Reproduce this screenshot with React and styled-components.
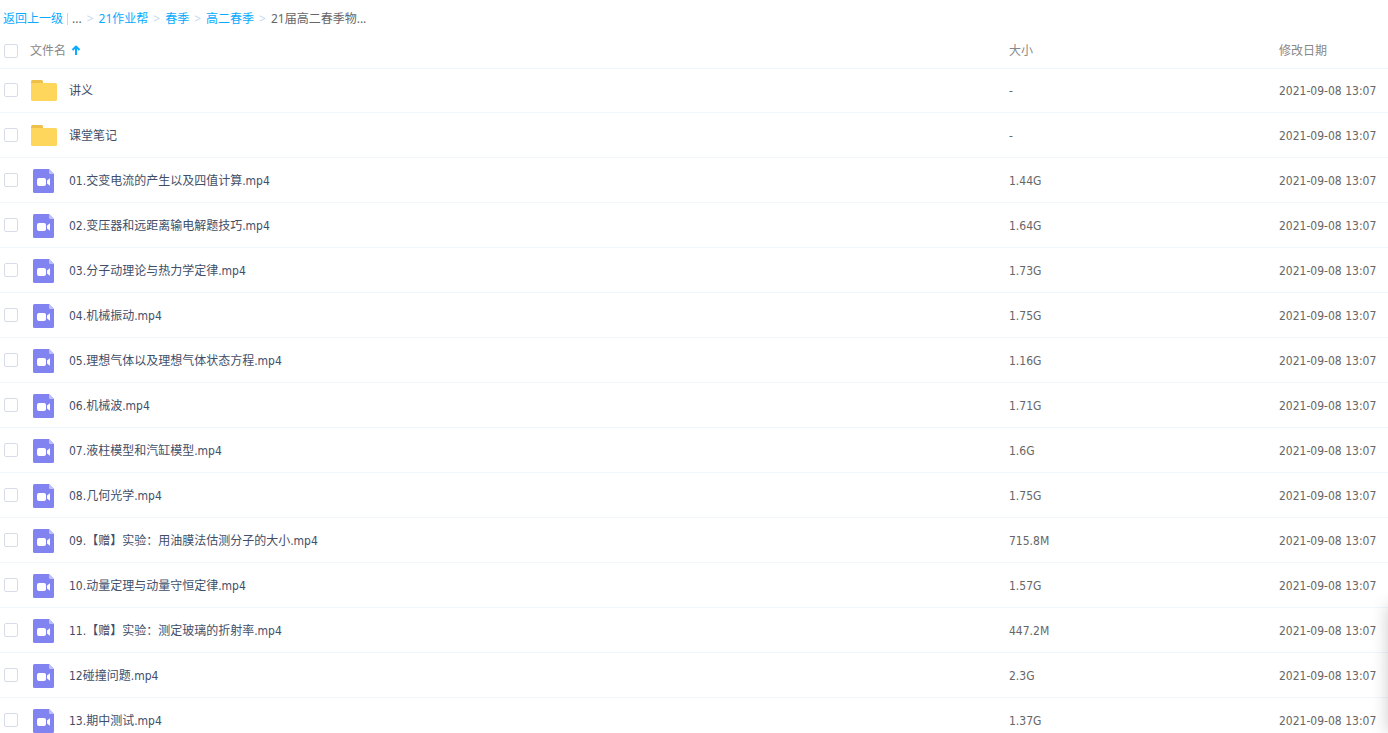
import React from 'react'
import styled, { createGlobalStyle } from 'styled-components'

const colors = {
  link: '#09aaff',
  divider: '#c4d8f0',
  line: '#f2f6fd',
  header: '#888888',
  name: '#424e67',
  meta: '#666666',
  box: '#d6dce8',
}

const GlobalStyle = createGlobalStyle`
  html {
    scrollbar-width: none;
  }

  body {
    margin: 0;
    background: #fff;
    font: 12px/18px "Noto Sans", "Noto Sans CJK SC", sans-serif;
  }
`;

const Page = styled.main`
  overflow: hidden;
`;

const Breadcrumb = styled.nav`
  display: flex;
  align-items: center;
  height: 30px;
  padding: 8px 3px 0;
  box-sizing: border-box;
  color: ${colors.meta};
  white-space: nowrap;
`;

const CrumbLink = styled.a`
  color: ${colors.link};
  text-decoration: none;
`;

const Bar = styled.span`
  width: 1px;
  height: 12px;
  margin: 0 4px;
  background: ${colors.divider};
`;

const Separator = styled.span`
  margin: 0 5px;
  color: ${colors.divider};
`;

const FileTable = styled.table`
  width: 100%;
  table-layout: fixed;
  border-collapse: separate;
  border-spacing: 0;
`;

const HeadCell = styled.th`
  width: ${({ $width }) => $width};
  height: 35px;
  padding: 3px 0 0;
  color: ${colors.header};
  font-weight: normal;
  text-align: left;
  box-shadow: 0 1px 0 ${colors.line};
`;

const Cell = styled.td`
  height: 42px;
  padding: 2px 0 0;
  border-bottom: 1px solid ${colors.line};
  color: ${colors.meta};
  font-family: "DejaVu Sans Condensed", "Noto Sans", "Noto Sans CJK SC", sans-serif;
  white-space: nowrap;
`;

const NameGroup = styled.div`
  display: flex;
  align-items: center;
  padding-left: 4px;
`;

const Checkbox = styled.input`
  appearance: none;
  flex: none;
  width: 14px;
  height: 14px;
  margin: 0 12px 0 0;
  border: 1px solid ${colors.box};
  border-radius: 2px;
  background: #fff;

  &:checked {
    background: ${colors.link};
  }

  td & {
    margin-bottom: 2px;
  }
`;

const IconSlot = styled.span`
  display: flex;
  justify-content: center;
  width: 28px;
  margin-right: 11px;
`;

const FileName = styled.label`
  color: ${colors.name};
`;

const SortButton = styled.button`
  display: flex;
  align-items: center;
  gap: 5px;
  padding: 0;
  border: 0;
  background: none;
  color: inherit;
  font: inherit;
`;

// panel docked just past the right edge, only its shadow shows
const DockedPanel = styled.aside`
  position: fixed;
  left: 100%;
  bottom: 0;
  width: 200px;
  height: 128px;
  box-shadow: 0 0 16px rgba(0, 0, 0, 0.2);
`;

const FolderIcon = () => (
  <svg width="26" height="22" viewBox="0 0 26 22" aria-hidden="true">
    <path d="M0 5V1.5Q0 0 1.5 0H10.5Q12 0 12 1.5V5Z" fill="#eebf4b" />
    <path d="M0 3H24.5Q26 3 26 4.5V19.5Q26 21 24.5 21H1.5Q0 21 0 19.5Z" fill="#ffd65c" />
  </svg>
)

const VideoIcon = () => (
  <svg width="22" height="24" viewBox="0 0 22 24" aria-hidden="true">
    <path d="M1.5 0H16L21 5V22.5Q21 24 19.5 24H1.5Q0 24 0 22.5V1.5Q0 0 1.5 0Z" fill="#8183f1" />
    <path d="M16 0L21 5H17.2Q16 5 16 3.8Z" fill="#bfc0f9" />
    <rect x="4" y="9" width="9" height="8" rx="2" fill="#fff" />
    <path d="M17 9.2V16.8L14 14.6V11.4Z" fill="#fff" />
  </svg>
)

const SortIcon = () => (
  <svg width="10" height="12" viewBox="0 0 10 12" aria-hidden="true">
    <path d="M5 10V1.5M1.5 5L5 1.5L8.5 5" fill="none" stroke={colors.link} strokeWidth="2" strokeLinejoin="round" />
  </svg>
)

const crumbs = ['21作业帮', '春季', '高二春季']

const files = [
  { name: '讲义', size: '-', folder: true },
  { name: '课堂笔记', size: '-', folder: true },
  { name: '01.交变电流的产生以及四值计算.mp4', size: '1.44G' },
  { name: '02.变压器和远距离输电解题技巧.mp4', size: '1.64G' },
  { name: '03.分子动理论与热力学定律.mp4', size: '1.73G' },
  { name: '04.机械振动.mp4', size: '1.75G' },
  { name: '05.理想气体以及理想气体状态方程.mp4', size: '1.16G' },
  { name: '06.机械波.mp4', size: '1.71G' },
  { name: '07.液柱模型和汽缸模型.mp4', size: '1.6G' },
  { name: '08.几何光学.mp4', size: '1.75G' },
  { name: '09.【赠】实验：用油膜法估测分子的大小.mp4', size: '715.8M' },
  { name: '10.动量定理与动量守恒定律.mp4', size: '1.57G' },
  { name: '11.【赠】实验：测定玻璃的折射率.mp4', size: '447.2M' },
  { name: '12碰撞问题.mp4', size: '2.3G' },
  { name: '13.期中测试.mp4', size: '1.37G' },
]

const FileRow = ({ id, file }) => (
  <tr>
    <Cell>
      <NameGroup>
        <Checkbox type="checkbox" id={id} />
        <IconSlot>{file.folder ? <FolderIcon /> : <VideoIcon />}</IconSlot>
        <FileName htmlFor={id}>{file.name}</FileName>
      </NameGroup>
    </Cell>
    <Cell>{file.size}</Cell>
    <Cell>2021-09-08 13:07</Cell>
  </tr>
)

const App = () => (
  <Page>
    <GlobalStyle />
    <Breadcrumb>
      <CrumbLink href="#">返回上一级</CrumbLink>
      <Bar />
      <span>...</span>
      {crumbs.map(crumb => (
        <React.Fragment key={crumb}>
          <Separator>&gt;</Separator>
          <CrumbLink href="#">{crumb}</CrumbLink>
        </React.Fragment>
      ))}
      <Separator>&gt;</Separator>
      <span>21届高二春季物...</span>
    </Breadcrumb>
    <FileTable>
      <thead>
        <tr>
          <HeadCell>
            <NameGroup>
              <Checkbox type="checkbox" aria-label="全选" />
              <SortButton type="button">文件名<SortIcon /></SortButton>
            </NameGroup>
          </HeadCell>
          <HeadCell $width="270px">大小</HeadCell>
          <HeadCell $width="109px">修改日期</HeadCell>
        </tr>
      </thead>
      <tbody>
        {files.map((file, i) => <FileRow key={file.name} id={`file-${i}`} file={file} />)}
      </tbody>
    </FileTable>
    <DockedPanel />
  </Page>
)

export default App
